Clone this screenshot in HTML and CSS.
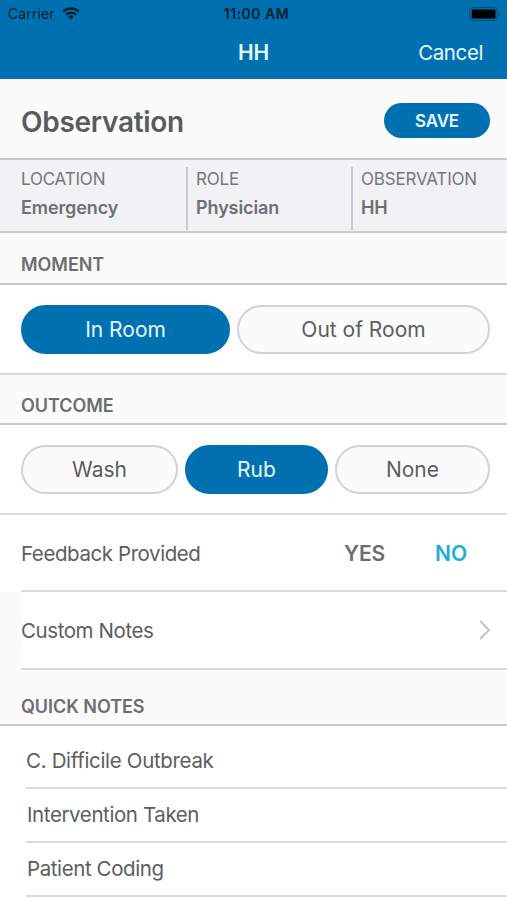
FILE: index.html
```html
<!DOCTYPE html>
<html lang="en">
<head>
<meta charset="utf-8">
<title>Observation</title>
<link rel="stylesheet" href="styles.css">
</head>
<body>
<header class="top">
  <div class="status">
    <div class="carrier"><span>Carrier</span>
      <svg class="wifi" viewBox="0 0 18 13" width="18" height="13" fill="none" stroke="#061c2e" stroke-width="2.3"><path d="M1.2 4.6a11 11 0 0 1 15.6 0M4 7.7a7.1 7.1 0 0 1 10 0"/><path d="M9 12.4 6.2 9.7a4 4 0 0 1 5.6 0z" fill="#061c2e" stroke="none"/></svg>
    </div>
    <span class="time">11:00 AM</span>
    <svg class="battery" viewBox="0 0 32 14" width="32" height="14"><rect x=".7" y=".7" width="27.6" height="12.6" rx="3" fill="none" stroke="#07456c"/><rect x="2.7" y="2.5" width="23.8" height="9" rx="1.3" fill="#000"/><path d="M30 4.8q1.6 2.2 0 4.4z" fill="#07456c"/></svg>
  </div>
  <nav class="nav"><span></span><strong class="nav-title">HH</strong><a class="cancel">Cancel</a></nav>
</header>
<main>
  <section class="title-row"><h1>Observation</h1><button class="save">SAVE</button></section>
  <section class="info">
    <div><span class="label">LOCATION</span><b>Emergency</b></div>
    <div><span class="label">ROLE</span><b>Physician</b></div>
    <div><span class="label">OBSERVATION</span><b>HH</b></div>
  </section>
  <h2 class="moment-title"><span>MOMENT</span></h2>
  <section class="choices two"><button class="pill active">In Room</button><button class="pill">Out of Room</button></section>
  <h2 class="outcome-title"><span>OUTCOME</span></h2>
  <section class="choices three"><button class="pill">Wash</button><button class="pill active">Rub</button><button class="pill">None</button></section>
  <section class="feedback"><span class="row-text">Feedback Provided</span><span class="yes">YES</span><span class="no">NO</span></section>
  <section class="custom"><div class="custom-inner"><span class="row-text">Custom Notes</span>
    <svg viewBox="0 0 12 20" width="12" height="20" fill="none" stroke="#c5c6c9" stroke-width="2.2"><path d="m1.2 1 8.8 9-8.8 9"/></svg></div></section>
  <h2 class="quick-title"><span>QUICK NOTES</span></h2>
  <ul class="notes"><li>C. Difficile Outbreak</li><li>Intervention Taken</li><li>Patient Coding</li></ul>
</main>
</body>
</html>
```
FILE: styles.css
```css
* { box-sizing: border-box; }
body { margin: 0; height: 900px; overflow: hidden; background: #fff; color: #5c5d60; font-family: Inter, "Liberation Sans", sans-serif; }
button { font: inherit; border: 0; padding: 0; }
.top { height: 79px; background: #0071b0; }
.status { height: 27px; display: grid; grid-template-columns: 1fr auto 1fr; align-items: center; padding: 0 6px 0 8px; color: #061c2e; font-size: 14px; }
.carrier { display: flex; align-items: center; gap: 7px; letter-spacing: .1px; }
.time { font-size: 14px; font-weight: 600; letter-spacing: .5px; margin-left: 4px; }
.battery { justify-self: end; }
.nav { height: 50px; display: grid; grid-template-columns: 1fr auto 1fr; align-items: center; padding: 0 24px; color: #e7f6ff; font-size: 21px; }
.nav-title { font-weight: 600; letter-spacing: -.2px; }
.cancel { justify-self: end; font-size: 20.5px; letter-spacing: -.4px; }
.title-row { height: 81px; display: flex; align-items: center; justify-content: space-between; padding: 4px 17px 0 21px; background: #fbfbfc; border-bottom: 2px solid #c9c9cc; }
h1 { margin: 0; padding-top: 2px; font-size: 28px; font-weight: 600; letter-spacing: -.3px; color: #5a5b5f; }
.save { width: 106px; height: 35px; border-radius: 18px; background: #0071b0; color: #e7f6ff; font-size: 17px; font-weight: 600; letter-spacing: -.2px; }
.info { height: 73px; display: grid; grid-template-columns: 188px 165px 1fr; background: #f2f2f4; border-bottom: 2px solid #c9c9cc; padding: 7px 0 1px; }
.info div { display: flex; flex-direction: column; padding: 1px 0 0 8px; border-right: 2px solid #c9c9cc; font-size: 18px; line-height: 22px; color: #6f6f73; }
.info div:first-child { padding-left: 21px; }
.info div:last-child { border: 0; }
.label { font-size: 17px; letter-spacing: -.2px; margin-bottom: 7px; color: #77777b; }
.info b { font-weight: 600; letter-spacing: -.1px; }
h2 { margin: 0; padding: 12px 21px 0; display: flex; align-items: center; background: #fbfbfc; border-bottom: 2px solid #c8c9cd; font-size: 18px; font-weight: 600; letter-spacing: -.05px; color: #6c6d70; }
.moment-title { height: 52px; }
.outcome-title { height: 50px; }
.quick-title { height: 56px; padding-top: 19px; }
.choices { height: 90px; display: grid; padding: 20px 17px 0 21px; align-items: start; border-bottom: 2px solid #dadadc; }
.two { grid-template-columns: 209px 253px; gap: 7px; }
.three { grid-template-columns: 157px 143px 155px; gap: 7px; }
.pill { height: 49px; border: 2px solid #d2d2d3; border-radius: 25px; background: #fbfbfc; color: #5c5d60; font-size: 21px; letter-spacing: 0; }
.pill.active { background: #0071b0; border-color: #0071b0; color: #e7f6ff; }
.row-text { flex: 1; font-size: 20.5px; letter-spacing: -.42px; }
.feedback { height: 77px; display: flex; align-items: center; margin-left: 21px; padding: 2px 40px 0 0; border-bottom: 2px solid #dadadc; font-size: 21px; }
.yes, .no { font-weight: 600; letter-spacing: -.1px; }
.yes { margin-right: 50px; color: #6c6d70; }
.no { color: #1fadde; }
.custom { height: 78px; padding-left: 21px; background: #fbfbfc; }
.custom-inner { height: 78px; display: flex; align-items: center; background: #fff; border-bottom: 2px solid #dadadc; padding: 0 16px 0 0; }
.notes { list-style: none; margin: 0 0 0 26px; padding: 0; }
.notes li { height: 54px; display: flex; align-items: center; padding: 0 0 1px 1px; border-bottom: 2px solid #dadadc; font-size: 20.5px; letter-spacing: -.4px; }
.notes li:first-child { height: 63px; padding: 7px 0 0; letter-spacing: -.33px; }
```
